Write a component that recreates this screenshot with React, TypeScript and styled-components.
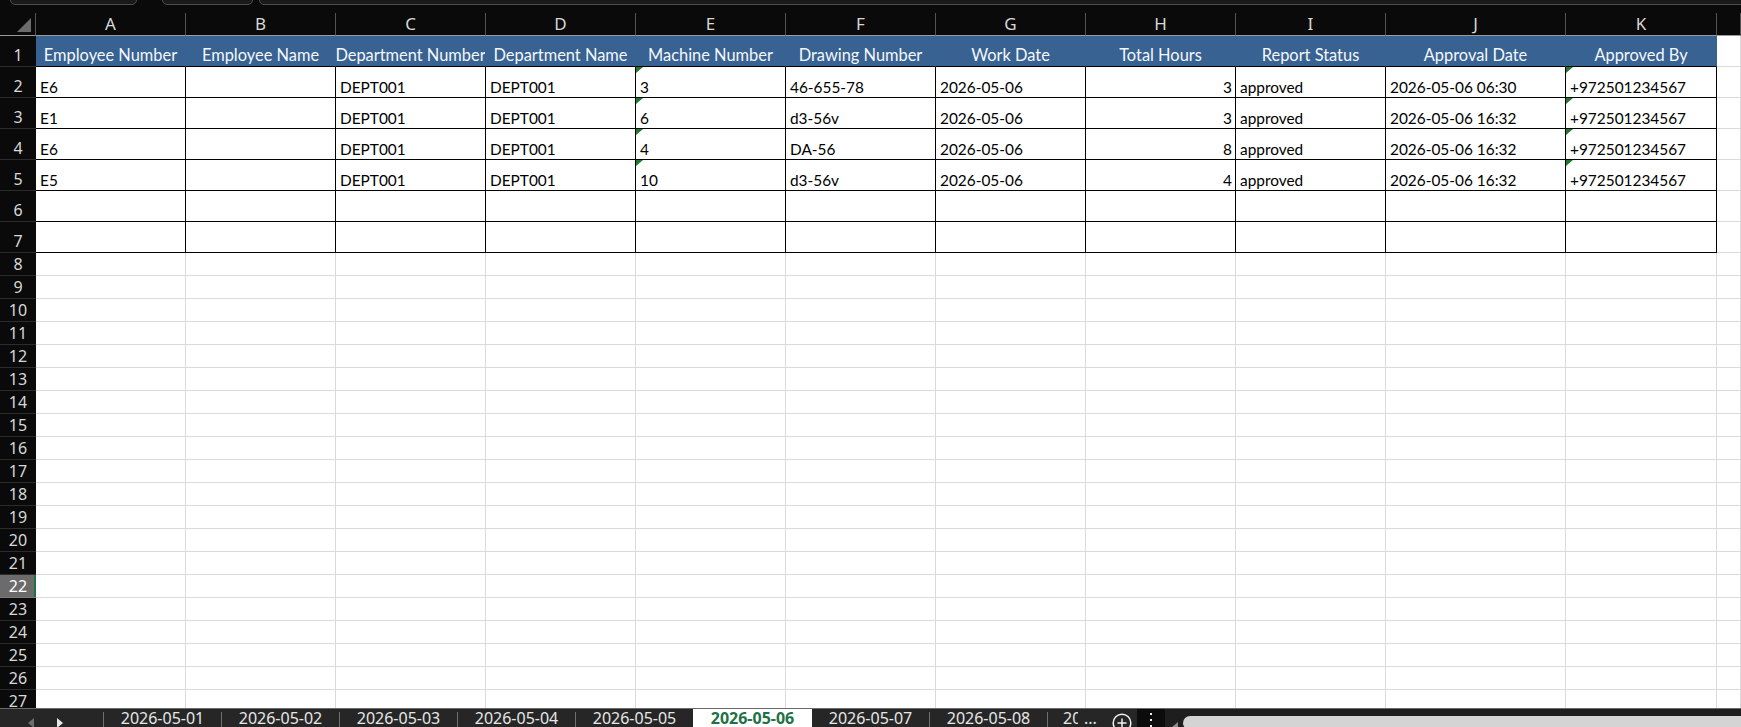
import React from 'react';
import styled, { createGlobalStyle, css } from 'styled-components';

const GlobalStyle = createGlobalStyle`
  html, body { margin: 0; padding: 0; background: #0a0a0a; }
  body { width: 1741px; height: 727px; overflow: hidden; }
  #root { width: 1741px; height: 727px; }
`;

const Window = styled.div`
  display: flex;
  flex-direction: column;
  width: 1741px;
  height: 727px;
  overflow: hidden;
  background: #0a0a0a;
`;

const TopBar = styled.div`
  flex: none;
  height: 13px;
  display: flex;
  align-items: flex-start;
  padding-left: 10px;
  overflow: hidden;
`;

const TopField = styled.div<{ $w?: number; $gap?: number }>`
  margin-top: -8px;
  margin-left: ${(p) => p.$gap ?? 0}px;
  height: 13px;
  box-sizing: border-box;
  border: 1px solid #4d4d4d;
  border-radius: 5px;
  background: #1a1a1a;
  width: ${(p) => (p.$w ? `${p.$w}px` : 'auto')};
  flex: ${(p) => (p.$w ? 'none' : '1')};
  margin-right: ${(p) => (p.$w ? 0 : -10)}px;
`;

const Sheet = styled.div`
  flex: 1;
  min-height: 0;
  overflow: hidden;
  display: grid;
  grid-template-columns: 36px repeat(9, 150px) 180px 151px 1fr;
  grid-template-rows: 23px repeat(7, 31px) repeat(20, 23px);
  background: #fff;
`;

const Corner = styled.div`
  background: #0a0a0a;
  border-right: 1px solid #545454;
  border-bottom: 1px solid #9b9b9b;
  display: flex;
  align-items: flex-end;
  justify-content: flex-end;
  padding: 0 4px 3px 0;
`;

const ColHead = styled.div`
  background: #0a0a0a;
  color: #d8d8d8;
  font-family: 'Noto Sans', 'Open Sans', sans-serif;
  font-size: 17px;
  line-height: 22px;
  border-right: 1px solid #545454;
  border-bottom: 1px solid #9b9b9b;
  display: flex;
  align-items: center;
  justify-content: center;
  overflow: hidden;
`;

const RowHead = styled.div<{ $active?: boolean; $tall?: boolean }>`
  background: ${(p) => (p.$active ? '#6b6b6b' : '#0a0a0a')};
  color: ${(p) => (p.$active ? '#ffffff' : '#d8d8d8')};
  font-family: 'Noto Sans', 'Open Sans', sans-serif;
  font-size: 16px;
  line-height: 22px;
  padding-bottom: ${(p) => (p.$tall ? 0 : 0)}px;
  border-bottom: 1px solid ${(p) => (p.$active ? '#7a7a7a' : '#2c2c2c')};
  display: flex;
  align-items: ${(p) => (p.$tall ? 'flex-end' : 'center')};
  justify-content: center;
  box-sizing: border-box;
  ${(p) =>
    p.$tall &&
    css`
      padding-top: 9px;
      line-height: 21px;
    `}
  ${(p) =>
    p.$active &&
    css`
      box-shadow: inset -2px 0 0 #1e7145;
    `}
`;

type Kind = 'head' | 'data' | 'empty';

const Cell = styled.div<{ $kind: Kind; $align?: 'left' | 'right' | 'center'; $flag?: boolean }>`
  position: relative;
  box-sizing: border-box;
  display: flex;
  align-items: flex-end;
  padding: 0 3px 0 4px;
  overflow: hidden;
  white-space: nowrap;
  font-family: Lato, 'Open Sans', sans-serif;
  font-size: 15.4px;
  line-height: 20px;
  color: #000;
  background: #fff;
  border-right: 1px solid #dadada;
  border-bottom: 1px solid #dadada;
  justify-content: ${(p) =>
    p.$align === 'right' ? 'flex-end' : p.$align === 'center' ? 'center' : 'flex-start'};
  ${(p) =>
    p.$kind === 'head' &&
    css`
      background: #386291;
      color: #f4f7fb;
      font-size: 16.4px;
      padding: 0 0 1px 0;
      justify-content: center;
      border-right-color: #386291;
      border-bottom-color: #000;
    `}
  ${(p) =>
    p.$kind === 'data' &&
    css`
      border-right-color: #000;
      border-bottom-color: #000;
    `}
  ${(p) =>
    p.$flag &&
    css`
      &::before {
        content: '';
        position: absolute;
        top: 0;
        left: 0;
        border-top: 6px solid #1f7a2e;
        border-right: 7px solid transparent;
      }
    `}
`;

const SheetBar = styled.div`
  flex: none;
  height: 19px;
  box-sizing: border-box;
  border-top: 1px solid #6a6a6a;
  background: #262626;
  display: flex;
  align-items: stretch;
  overflow: hidden;
  font-family: 'Noto Sans', 'Open Sans', sans-serif;
  font-size: 16px;
  line-height: 18px;
  color: #e6e6e6;
`;

const NavArea = styled.div`
  flex: none;
  width: 103px;
  display: flex;
  align-items: flex-start;
  padding: 9px 0 0 28px;
  gap: 23px;
  box-sizing: border-box;
`;

const Sep = styled.div`
  flex: none;
  width: 1px;
  margin-top: 3px;
  background: #707070;
`;

const Tab = styled.div<{ $active?: boolean; $w?: number }>`
  flex: none;
  width: ${(p) => p.$w ?? 117}px;
  display: flex;
  justify-content: center;
  white-space: nowrap;
  ${(p) =>
    p.$active &&
    css`
      background: #ffffff;
      color: #1e7145;
      font-weight: 700;
      margin-top: -1px;
      padding-top: 1px;
    `}
`;

const PartialTab = styled.div`
  flex: none;
  width: 58px;
  display: flex;
  padding-left: 15px;
  box-sizing: border-box;
  white-space: nowrap;
`;

const Clip = styled.span`
  display: inline-block;
  width: 15px;
  overflow: hidden;
`;

const Dots = styled.span`
  margin-left: 6px;
`;

const AddButton = styled.div`
  flex: none;
  width: 31px;
  display: flex;
  justify-content: center;
  padding-top: 4px;
  box-sizing: border-box;
`;

const MenuArea = styled.div`
  flex: none;
  width: 28px;
  background: #0c0c0c;
  display: flex;
  flex-direction: column;
  align-items: center;
  gap: 3.5px;
  padding-top: 4px;
  box-sizing: border-box;
`;

const MenuDot = styled.div`
  width: 2.5px;
  height: 2.5px;
  background: #f0f0f0;
`;

const ScrollArea = styled.div`
  flex: 1;
  display: flex;
  align-items: flex-start;
  background: #1e1e1e;
  padding-left: 7px;
`;

const ScrollLeft = styled.div`
  flex: none;
  margin-top: 8px;
`;

const Thumb = styled.div`
  flex: 1;
  margin: 7px 0 0 5px;
  height: 14px;
  background: #d4d4d4;
  border-radius: 7px 0 0 7px;
`;

const letters = ['A', 'B', 'C', 'D', 'E', 'F', 'G', 'H', 'I', 'J', 'K', ''];

const headers = [
  'Employee Number',
  'Employee Name',
  'Department Number',
  'Department Name',
  'Machine Number',
  'Drawing Number',
  'Work Date',
  'Total Hours',
  'Report Status',
  'Approval Date',
  'Approved By',
];

const rows: string[][] = [
  ['E6', '', 'DEPT001', 'DEPT001', '3', '46-655-78', '2026-05-06', '3', 'approved', '2026-05-06 06:30', '+972501234567'],
  ['E1', '', 'DEPT001', 'DEPT001', '6', 'd3-56v', '2026-05-06', '3', 'approved', '2026-05-06 16:32', '+972501234567'],
  ['E6', '', 'DEPT001', 'DEPT001', '4', 'DA-56', '2026-05-06', '8', 'approved', '2026-05-06 16:32', '+972501234567'],
  ['E5', '', 'DEPT001', 'DEPT001', '10', 'd3-56v', '2026-05-06', '4', 'approved', '2026-05-06 16:32', '+972501234567'],
  ['', '', '', '', '', '', '', '', '', '', ''],
  ['', '', '', '', '', '', '', '', '', '', ''],
];

const tabsBefore = ['2026-05-01', '2026-05-02', '2026-05-03', '2026-05-04', '2026-05-05'];
const tabsAfter = ['2026-05-07', '2026-05-08'];

const CornerTriangle = () => (
  <svg width="14" height="14" viewBox="0 0 14 14">
    <polygon points="14,0 14,14 0,14" fill="#6b6b6b" />
  </svg>
);

const Arrow = ({ dir, color }: { dir: 'left' | 'right'; color: string }) => (
  <svg width="6" height="10" viewBox="0 0 6 10">
    {dir === 'left' ? (
      <polygon points="6,0 6,10 0,5" fill={color} />
    ) : (
      <polygon points="0,0 0,10 6,5" fill={color} />
    )}
  </svg>
);

const PlusCircle = () => (
  <svg width="20" height="20" viewBox="0 0 20 20">
    <circle cx="10" cy="10" r="8.8" fill="none" stroke="#f2f2f2" strokeWidth="1.5" />
    <line x1="10" y1="5.5" x2="10" y2="14.5" stroke="#f2f2f2" strokeWidth="1.5" />
    <line x1="5.5" y1="10" x2="14.5" y2="10" stroke="#f2f2f2" strokeWidth="1.5" />
  </svg>
);

export default function App() {
  const emptyRows = Array.from({ length: 20 }, (_, i) => i + 8);
  return (
    <>
      <GlobalStyle />
      <Window>
        <TopBar>
          <TopField $w={127} />
          <TopField $w={91} $gap={25} />
          <TopField $gap={6} />
        </TopBar>
        <Sheet>
          <Corner>
            <CornerTriangle />
          </Corner>
          {letters.map((l, i) => (
            <ColHead key={`c${i}`}>{l}</ColHead>
          ))}

          <RowHead $tall>1</RowHead>
          {headers.map((h) => (
            <Cell key={h} $kind="head">
              {h}
            </Cell>
          ))}
          <Cell $kind="empty" />

          {rows.map((r, ri) => (
            <React.Fragment key={`r${ri}`}>
              <RowHead $tall>{ri + 2}</RowHead>
              {r.map((v, ci) => (
                <Cell
                  key={ci}
                  $kind="data"
                  $align={ci === 7 ? 'right' : 'left'}
                  $flag={v !== '' && (ci === 4 || ci === 10)}
                >
                  {v}
                </Cell>
              ))}
              <Cell $kind="empty" />
            </React.Fragment>
          ))}

          {emptyRows.map((n) => (
            <React.Fragment key={`e${n}`}>
              <RowHead $active={n === 22}>{n}</RowHead>
              {letters.map((_, ci) => (
                <Cell key={ci} $kind="empty" />
              ))}
            </React.Fragment>
          ))}
        </Sheet>
        <SheetBar>
          <NavArea>
            <Arrow dir="left" color="#6e6e6e" />
            <Arrow dir="right" color="#e6e6e6" />
          </NavArea>
          {tabsBefore.map((t) => (
            <React.Fragment key={t}>
              <Sep />
              <Tab>{t}</Tab>
            </React.Fragment>
          ))}
          <Tab $active $w={119}>
            2026-05-06
          </Tab>
          <Tab>{tabsAfter[0]}</Tab>
          <Sep />
          <Tab>{tabsAfter[1]}</Tab>
          <Sep />
          <PartialTab>
            <Clip>20</Clip>
            <Dots>...</Dots>
          </PartialTab>
          <AddButton>
            <PlusCircle />
          </AddButton>
          <MenuArea>
            <MenuDot />
            <MenuDot />
            <MenuDot />
          </MenuArea>
          <ScrollArea>
            <ScrollLeft>
              <Arrow dir="left" color="#8a8a8a" />
            </ScrollLeft>
            <Thumb />
          </ScrollArea>
        </SheetBar>
      </Window>
    </>
  );
}
